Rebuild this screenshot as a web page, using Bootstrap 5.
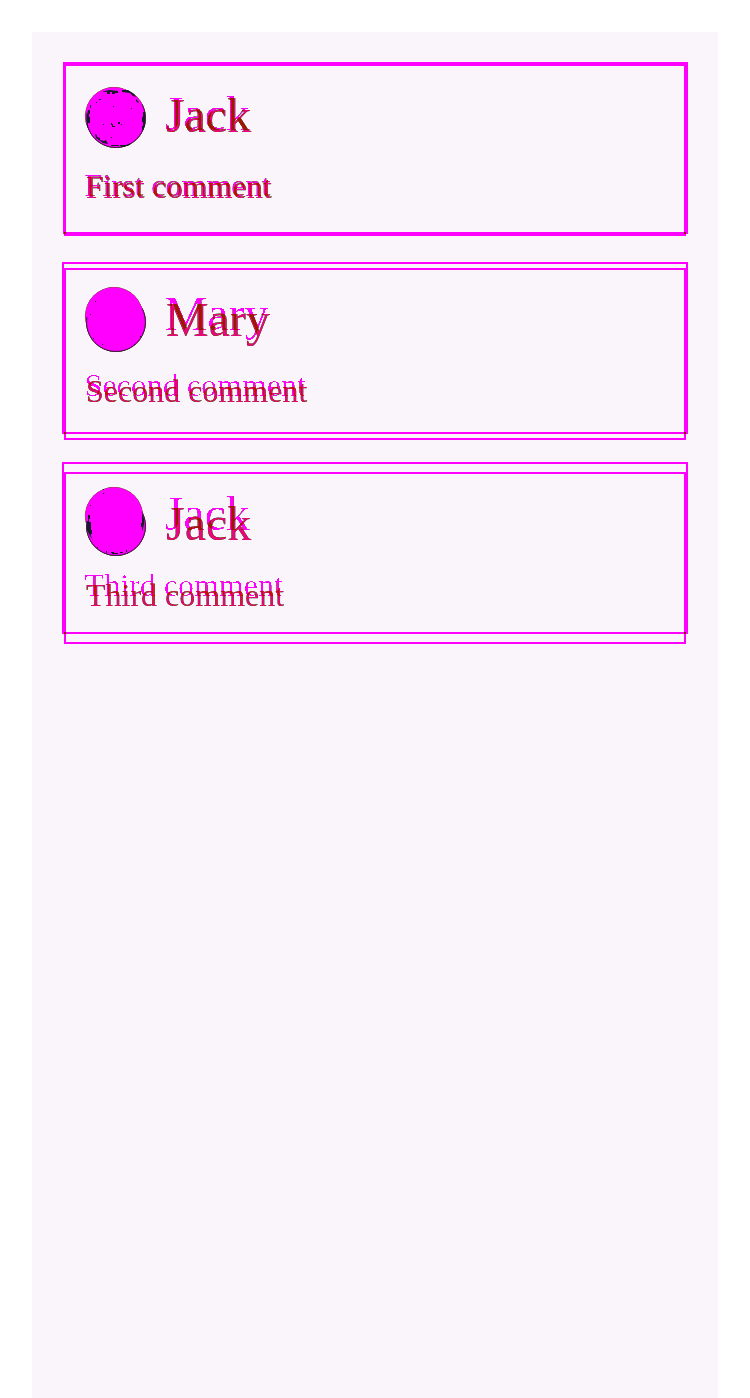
<!DOCTYPE html>
<html lang="en">
<head>
<meta charset="utf-8">
<meta name="viewport" content="width=device-width, initial-scale=1">
<title>Comments comparison</title>
<link href="https://cdn.jsdelivr.net/npm/bootstrap@5.3.0/dist/css/bootstrap.min.css" rel="stylesheet">
<style>
body{background:#fff;font-family:"Liberation Serif",serif}
.panel{background:#f9f5fb;margin:32px 32px 0;min-height:1366px;padding-top:32px}
/* red = older layer, lime = newer layer, yellow = both; the filter recolours them */
.compare{filter:url(#difference);isolation:isolate}
.stack{gap:32px;margin:0 32px;color:#0f0}
.entry{height:172px;border:2px solid currentColor;padding:22px 20px 0}
.avatar{width:60px;height:60px;flex:none;overflow:visible}
.author{font-size:48px;line-height:56px;margin-left:20px;color:rgb(65,255,0)}
.message{font-size:32px;line-height:37px;margin:21px 0 0;color:rgb(166,158,0)}
.stack:not(.older) .entry:first-child .message{color:rgb(120,185,0)}
.older{top:-2px;left:-2px;right:-2px;gap:28px;margin:0 32px;color:#f00;mix-blend-mode:screen}
.older .author{margin-left:20.5px;color:#f00;filter:url(#crisp)}
.older .message{padding-left:.6px;color:#f00;filter:url(#crisp)}
.older .entry:first-child{clip-path:inset(0 0 0 1px)}
.older .entry:first-child .message{filter:none}
</style>
</head>
<body>
<svg class="position-absolute" width="0" height="0" aria-hidden="true">
<defs>
<filter id="difference" x="0" y="0" width="100%" height="100%" color-interpolation-filters="sRGB">
<feColorMatrix values="-.41 -.41 -.5 1.41 0  .1 .1 0 -.1 0  -2 -2 1.17 3 0  0 0 0 1.1 -.06"/>
</filter>
<filter id="crisp" color-interpolation-filters="sRGB"><feComponentTransfer><feFuncA type="linear" slope="5" intercept="-3.2"/></feComponentTransfer></filter>
<symbol id="newer-face" viewBox="0 0 60 60"><circle cx="30" cy="30" r="30" fill="#f00"/></symbol>
<g id="rim" fill="none" stroke="#fff"><path d="M56 16.4A29.4 29.4 0 1 1 1 25" stroke-width=".8"/></g>
</defs>
</svg>
<main class="panel">
<div class="compare position-relative">
<section class="stack d-flex flex-column">
<article class="entry">
<div class="d-flex align-items-start">
<svg class="avatar" viewBox="0 0 60 60"><use href="#newer-face"/><use href="#rim"/>
<path fill="#fff" d="M16 4l7-2 9 1v2h-3v1h-3V4h-2v2h-3V4zM36 2h6l6 4 2 3-3-1-3-3-8-1zM2 22h2v4h-1v3h1v6H2v4H1V27zM57 24h2v13l-2 5h-1v-4h1v-4h-1v-5h1zM9 46l2 1v2l3 1v2l4 1 2-1 2 4-5-1-7-5zM25 57h8v1h-8zM34 57h6l5-2-1 2-7 2-3-1zM10 14h1v1h-1zM13 11h2v1h-2zM27 18h1v1h-1zM45 20h1v1h-1zM17 36h1v1h-1zM25 35h1v1h1v2h2v1h-3v-2h-1zM32 34h2v2h-2zM35 36h1v1h-1zM25 49h1v1h-1zM4 17h1v3H4zM50 11l3 3-1 1-2-2z"/></svg>
<div class="author">Jack</div></div>
<p class="message">First comment</p>
</article>
<article class="entry">
<div class="d-flex align-items-start">
<svg class="avatar" viewBox="0 0 60 60"><use href="#newer-face"/><use href="#rim"/>
<path fill="#fff" d="M9 9h1v1H9zM4 22h1v1H4zM7 46h1v1H7zM16 52h1v1h-1zM48 52h1v1h-1zM54 44h1v1h-1z"/></svg>
<div class="author">Mary</div></div>
<p class="message">Second comment</p>
</article>
<article class="entry">
<div class="d-flex align-items-start">
<svg class="avatar" viewBox="0 0 60 60"><use href="#newer-face"/><use href="#rim"/>
<path fill="#fff" d="M2 19h2v4H3v3h2v8h1v4h-1v2l2 4-3-4-3-6v-9h1zM56 19h1l1 4v5l-1 5-1 2v-4h-1v-4h1zM20 55h1v2h-1zM25 56h3v1h4v1h-6v-1h-1zM34 56h3v1h-3zM40 54h1v2h-1zM11 51h1v1h-1zM17-3h1v1h-1zM17-7h1v1h-1zM4 9h1v1H4z"/></svg>
<div class="author">Jack</div></div>
<p class="message">Third comment</p>
</article>
</section>
<section class="older position-absolute d-flex flex-column" aria-hidden="true">
<article class="entry"><div class="d-flex align-items-start"><svg class="avatar" viewBox="0 0 60 60"><circle cx="30" cy="30" r="29" fill="#f00"/></svg><div class="author">Jack</div></div><p class="message">First comment</p></article>
<article class="entry"><div class="d-flex align-items-start"><svg class="avatar" viewBox="0 0 60 60"><circle cx="30" cy="30" r="29" fill="#f00"/></svg><div class="author">Mary</div></div><p class="message">Second comment</p></article>
<article class="entry"><div class="d-flex align-items-start"><svg class="avatar" viewBox="0 0 60 60"><circle cx="30" cy="30" r="29" fill="#f00"/></svg><div class="author">Jack</div></div><p class="message">Third comment</p></article>
</section>
</div>
</main>
<script src="https://cdn.jsdelivr.net/npm/bootstrap@5.3.0/dist/js/bootstrap.bundle.min.js"></script>
</body>
</html>
